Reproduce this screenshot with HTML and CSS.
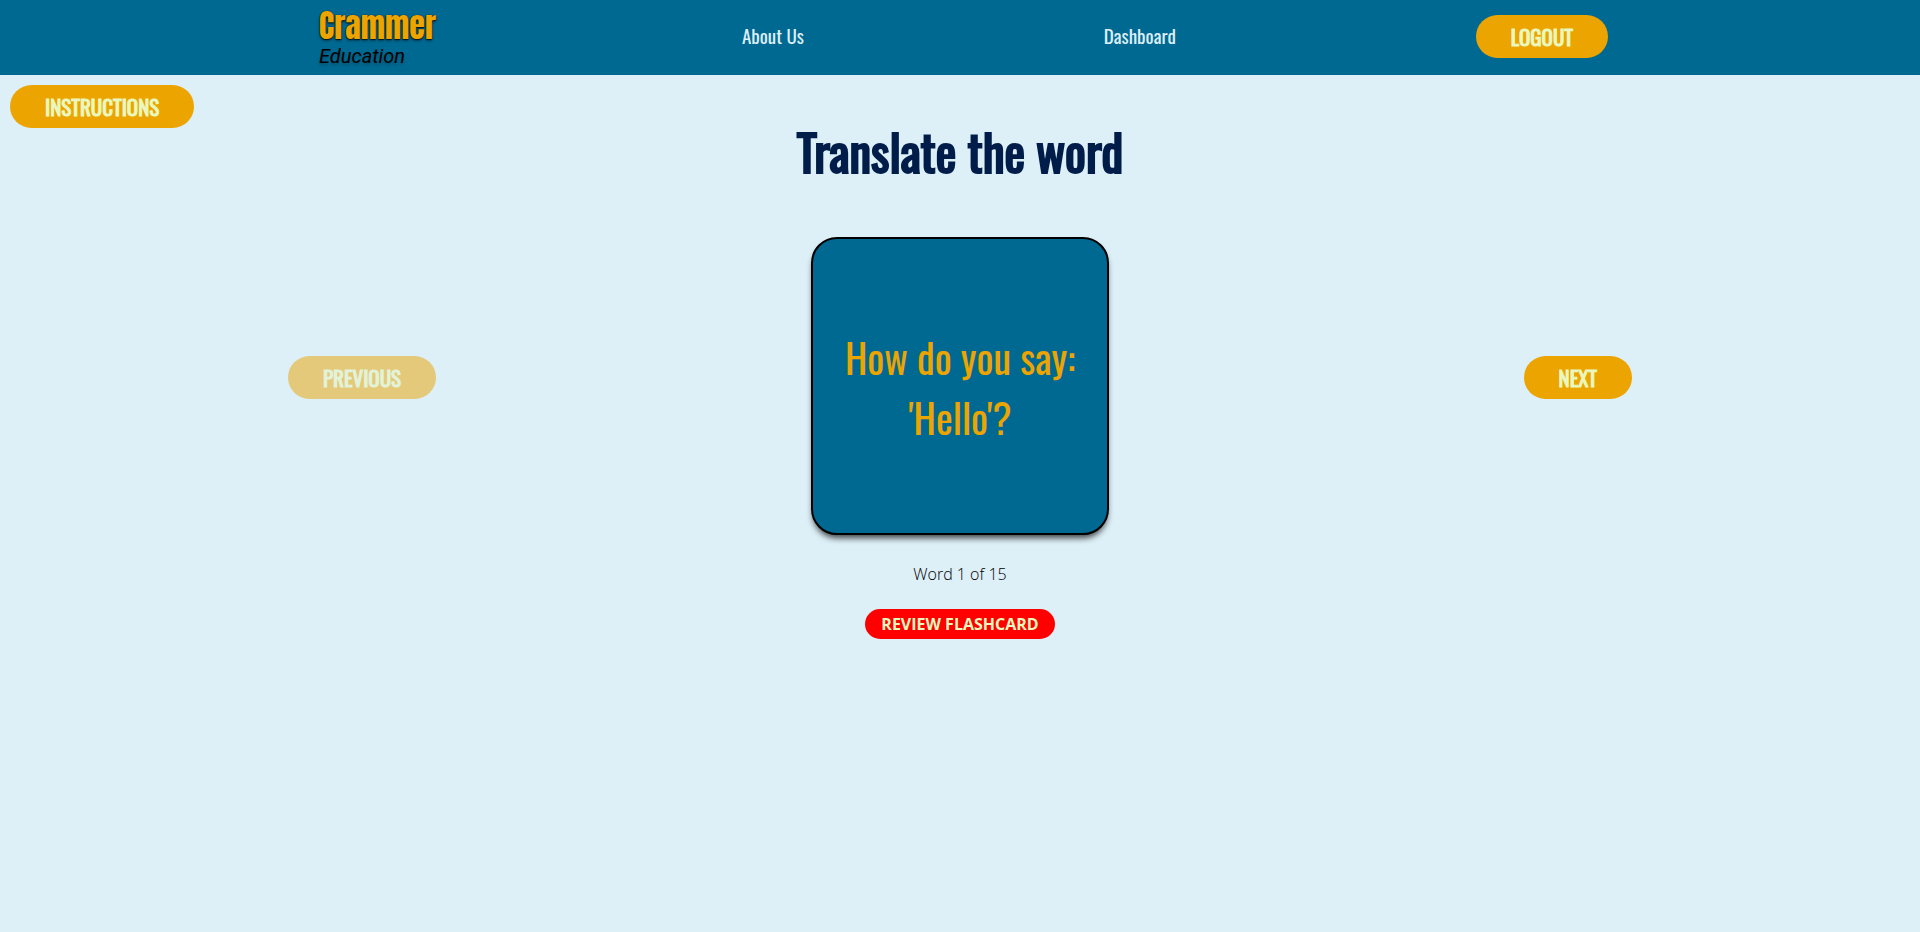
FILE: index.html
```html
<!DOCTYPE html>
<html lang="en">
<head>
<meta charset="utf-8">
<meta name="viewport" content="width=device-width, initial-scale=1">
<title>Crammer Education</title>
<link rel="stylesheet" href="styles.css">
</head>
<body>
<nav class="navbar">
  <a class="logo" href="#"><span class="logo-name">Crammer</span><span class="logo-sub">Education</span></a>
  <a class="nav-link" href="#">About Us</a>
  <a class="nav-link" href="#">Dashboard</a>
  <button class="btn" type="button">LOGOUT</button>
</nav>
<main class="page">
  <button class="btn btn-instructions" type="button">INSTRUCTIONS</button>
  <h1 class="title">Translate the word</h1>
  <section class="deck">
    <button class="btn btn-previous" type="button" disabled>PREVIOUS</button>
    <button class="card" type="button">How do you say: 'Hello'?</button>
    <button class="btn btn-next" type="button">NEXT</button>
  </section>
  <p class="progress">Word 1 of 15</p>
  <button class="review" type="button">REVIEW FLASHCARD</button>
</main>
</body>
</html>
```
FILE: styles.css
```css
:root {
  --blue: #006992;
  --gold: #eca400;
  --pale: #ddeff7;
  --navy: #001d4a;
  --cream: #eaf8bf;
  --condensed: Oswald, "Liberation Sans Narrow", "Roboto Condensed", "Open Sans Condensed", "Roboto", sans-serif;
}
* { box-sizing: border-box; }
body {
  margin: 0;
  min-height: 100vh;
  background: var(--pale);
  color: #000;
  font: 16px/24px "Segoe UI", "Open Sans", sans-serif;
}
button { border: 0; cursor: pointer; }
.navbar {
  display: flex;
  align-items: center;
  justify-content: space-between;
  min-height: 75px;
  padding: 0 calc(15% + 24px) 2px;
  background: var(--blue);
}
.logo {
  display: flex;
  flex-direction: column;
  width: 130px;
  padding: 4px 0 0 7px;
  text-decoration: none;
}
.logo-name {
  color: var(--gold);
  font: 32px/34px Anton, var(--condensed);
  text-shadow: 0 0 1px #000, 0 1px 1px #000a, 0 2px 3px #0006;
}
.logo-sub {
  color: #000;
  font: italic 20px/26px Roboto, sans-serif;
  text-shadow: 0 2px 3px #0004;
}
.nav-link {
  padding-bottom: 4px;
  color: var(--pale);
  font: 19px/30px var(--condensed);
  text-decoration: none;
}
.btn {
  padding: 7px 35px 6px;
  border-radius: 24px;
  background: var(--gold);
  color: var(--cream);
  font: 21px/30px var(--condensed);
  -webkit-text-stroke: 1px;
}
.page {
  display: flex;
  flex-direction: column;
  align-items: center;
}
.btn-instructions {
  align-self: flex-start;
  margin: 10px 10px 0;
}
.title {
  margin: 0 0 63px;
  color: var(--navy);
  font: 49px/46px var(--condensed);
  -webkit-text-stroke: 2px;
}
.deck {
  display: grid;
  grid-template-columns: 1fr auto 1fr;
  align-items: center;
  width: 70%;
}
.btn-previous,
.btn-next { margin-bottom: 17px; }
.btn-previous { justify-self: start; opacity: .5; }
.btn-next { justify-self: end; }
.card {
  width: 298px;
  aspect-ratio: 1;
  padding: 18px 16px 16px;
  border: 2px solid #000;
  border-radius: 26px;
  background: var(--blue);
  box-shadow: 0 5px 6px -2px #000b;
  color: var(--gold);
  font: 40px/60px var(--condensed);
}
.progress { margin: 27px 0 23px; font-weight: 300; }
.review {
  padding: 3px 16px;
  border-radius: 16px;
  background: red;
  color: var(--cream);
  font: bold 16px/24px "Segoe UI", "Open Sans", sans-serif;
}
```
